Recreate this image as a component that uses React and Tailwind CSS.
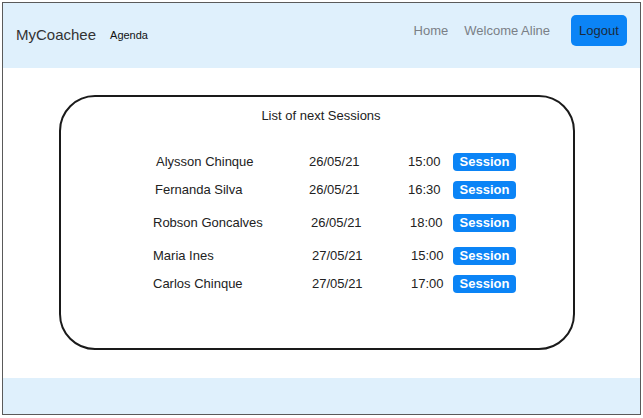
import React from "react";

const sessions = [
  { name: "Alysson Chinque", date: "26/05/21", time: "15:00", row: "mt-[29px]", pl: "pl-[95px]", wn: "w-[153px]", wt: "w-[45px]" },
  { name: "Fernanda Silva", date: "26/05/21", time: "16:30", row: "mt-[8px]", pl: "pl-[94px]", wn: "w-[154px]", wt: "w-[45px]" },
  { name: "Robson Goncalves", date: "26/05/21", time: "18:00", row: "mt-[13px]", pl: "pl-[92px]", wn: "w-[158px]", wt: "w-[43px]" },
  { name: "Maria Ines", date: "27/05/21", time: "15:00", row: "mt-[13px]", pl: "pl-[92px]", wn: "w-[159px]", wt: "w-[42px]" },
  { name: "Carlos Chinque", date: "27/05/21", time: "17:00", row: "mt-[8px]", pl: "pl-[92px]", wn: "w-[159px]", wt: "w-[42px]" },
];

function SessionRow({ s }) {
  return (
    <div className={`flex items-center h-[20px] text-[13px] text-[#222] ${s.row} ${s.pl}`}>
      <span className={s.wn}>{s.name}</span>
      <span className="w-[99px]">{s.date}</span>
      <span className={s.wt}>{s.time}</span>
      <button className="w-[63px] h-[18px] rounded-[4px] bg-[#0b84f6] text-white font-bold text-[13px] leading-[18px]">
        Session
      </button>
    </div>
  );
}

export default function App() {
  return (
    <div className="w-[643px] h-[418px] bg-white pt-[2px] pl-[2px] font-['Liberation_Sans',Arial,sans-serif]">
      <div className="w-[639px] h-[413px] border border-[#5a5a5a] flex flex-col">
        {/* Header */}
        <header className="h-[65px] bg-[#dff0fc] flex items-center pl-[13px] pr-[13px]">
          <span className="text-[15px] text-[#333]">MyCoachee</span>
          <span className="ml-[14px] text-[11px] text-[#111]">Agenda</span>
          <div className="ml-auto mb-[10px] flex items-center">
            <span className="text-[13px] text-[#7a7f86]">Home</span>
            <span className="ml-[16px] text-[13px] text-[#7a7f86]">Welcome Aline</span>
            <button className="ml-[21px] w-[56px] h-[31px] rounded-[5px] bg-[#0b84f6] text-[13px] text-[#1b2a3c]">
              Logout
            </button>
          </div>
        </header>

        {/* Main */}
        <main className="flex-1 pt-[27px] pl-[56px]">
          <div className="w-[516px] h-[255px] border-2 border-[#1a1a1a] rounded-[36px] flex flex-col">
            <p className="mt-[11px] text-center pl-[8px] text-[13px] leading-[15px] text-[#222]">
              List of next Sessions
            </p>
            {sessions.map((s) => (
              <SessionRow key={s.name} s={s} />
            ))}
          </div>
        </main>

        {/* Footer */}
        <footer className="h-[36px] bg-[#dff0fc]" />
      </div>
    </div>
  );
}
